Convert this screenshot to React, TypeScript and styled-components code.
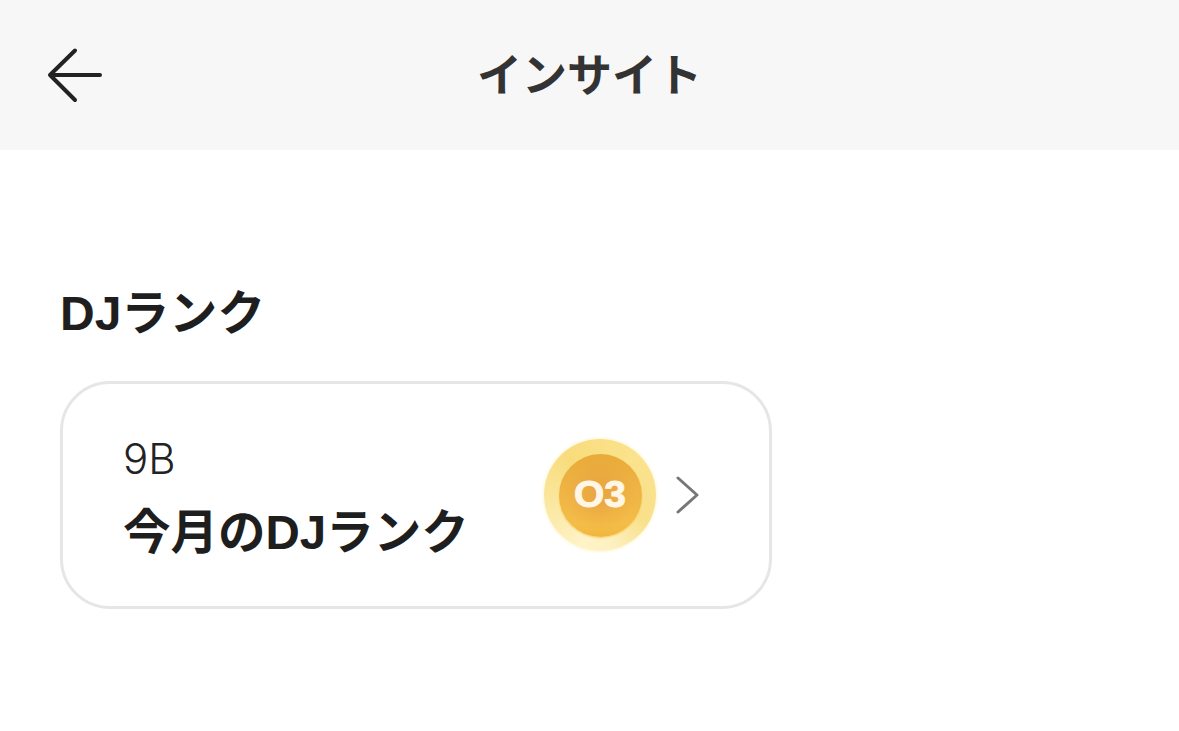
import styled, { createGlobalStyle } from 'styled-components';

const GlobalStyle = createGlobalStyle`
	html, body {
		margin: 0;
		padding: 0;
		background: #fff;
		font-family: 'Liberation Sans', 'Noto Sans CJK JP', sans-serif;
	}
`;

const Page = styled.div`
	width: 1179px;
	height: 731px;
	overflow: hidden;
	background: #fff;
`;

const Header = styled.header`
	display: grid;
	grid-template-columns: 1fr auto 1fr;
	align-items: center;
	height: 150px;
	padding: 0 47px;
	box-sizing: border-box;
	background: #f7f7f7;
`;

const BackButton = styled.button`
	display: flex;
	width: 56px;
	height: 56px;
	padding: 0;
	border: 0;
	background: none;
	justify-self: start;
`;

const Title = styled.h1`
	margin: 0;
	padding-top: 3px;
	font-size: 45px;
	line-height: 56px;
	font-weight: 700;
	color: #333;
`;

const Section = styled.section`
	padding: 134px 0 0 60px;
`;

const SectionTitle = styled.h2`
	margin: 0 0 37px;
	font-size: 48px;
	line-height: 60px;
	font-weight: 700;
	color: #1e1e1e;
`;

const Card = styled.div`
	display: flex;
	align-items: center;
	justify-content: space-between;
	width: 712px;
	height: 228px;
	padding: 0 69px 0 60px;
	box-sizing: border-box;
	background: #fff;
	border: 3px solid #e6e6e6;
	border-radius: 50px;
`;

const CardText = styled.div`
	display: flex;
	flex-direction: column;
	gap: 22px;
	padding-top: 7px;
`;

const RankValue = styled.span`
	font-family: Inter, 'Liberation Sans', sans-serif;
	font-size: 42px;
	line-height: 46px;
	font-weight: 300;
	color: #222;
`;

const RankLabel = styled.span`
	font-size: 47.5px;
	line-height: 58px;
	font-weight: 700;
	color: #1e1e1e;
`;

const RankBadge = styled.div`
	display: flex;
	align-items: center;
	gap: 20px;
`;

const Coin = styled.div`
	display: flex;
	align-items: center;
	justify-content: center;
	width: 112px;
	height: 112px;
	border-radius: 50%;
	background: conic-gradient(
		from 200deg,
		#fff3c8 0deg,
		#fbe9a6 50deg,
		#f8dc7c 120deg,
		#fbe28c 200deg,
		#f9e08a 280deg,
		#fdf0c0 325deg,
		#fff3c8 360deg
	);
	box-shadow: 0 0 4px #fdf0c0;
`;

const CoinFace = styled.div`
	display: flex;
	align-items: center;
	justify-content: center;
	width: 83px;
	height: 83px;
	border-radius: 50%;
	background:
		radial-gradient(circle at 50% 50%, rgba(226, 150, 60, 0.55) 0%, rgba(238, 176, 67, 0) 60%),
		linear-gradient(180deg, #e8ab3a 0%, #f0b545 50%, #f4bd48 85%, #f1b53e 100%);
	box-shadow: 0 1px 2px #f6cf62;
`;

const CoinText = styled.span`
	font-family: 'Liberation Sans', sans-serif;
	font-size: 36px;
	line-height: 40px;
	font-weight: 700;
	color: #fff6e6;
	-webkit-text-stroke: 1px #fff6e6;
	transform: scaleX(1.08);
`;

export default function App() {
	return (
		<Page>
			<GlobalStyle />
			<Header>
				<BackButton aria-label="back">
					<svg width="56" height="56" viewBox="0 0 56 56" fill="none">
						<path
							d="M28 3.5 L3 28 L28 53 M3 28 H53"
							stroke="#222"
							strokeWidth="4"
							strokeLinecap="round"
							strokeLinejoin="round"
						/>
					</svg>
				</BackButton>
				<Title>インサイト</Title>
			</Header>
			<Section>
				<SectionTitle>DJランク</SectionTitle>
				<Card>
					<CardText>
						<RankValue>9B</RankValue>
						<RankLabel>今月のDJランク</RankLabel>
					</CardText>
					<RankBadge>
						<Coin>
							<CoinFace>
								<CoinText>O3</CoinText>
							</CoinFace>
						</Coin>
						<svg width="24" height="38" viewBox="0 0 24 38" fill="none">
							<path d="M2 2 L21 19 L2 36" stroke="#777" strokeWidth="3" strokeLinecap="round" strokeLinejoin="round" />
						</svg>
					</RankBadge>
				</Card>
			</Section>
		</Page>
	);
}
